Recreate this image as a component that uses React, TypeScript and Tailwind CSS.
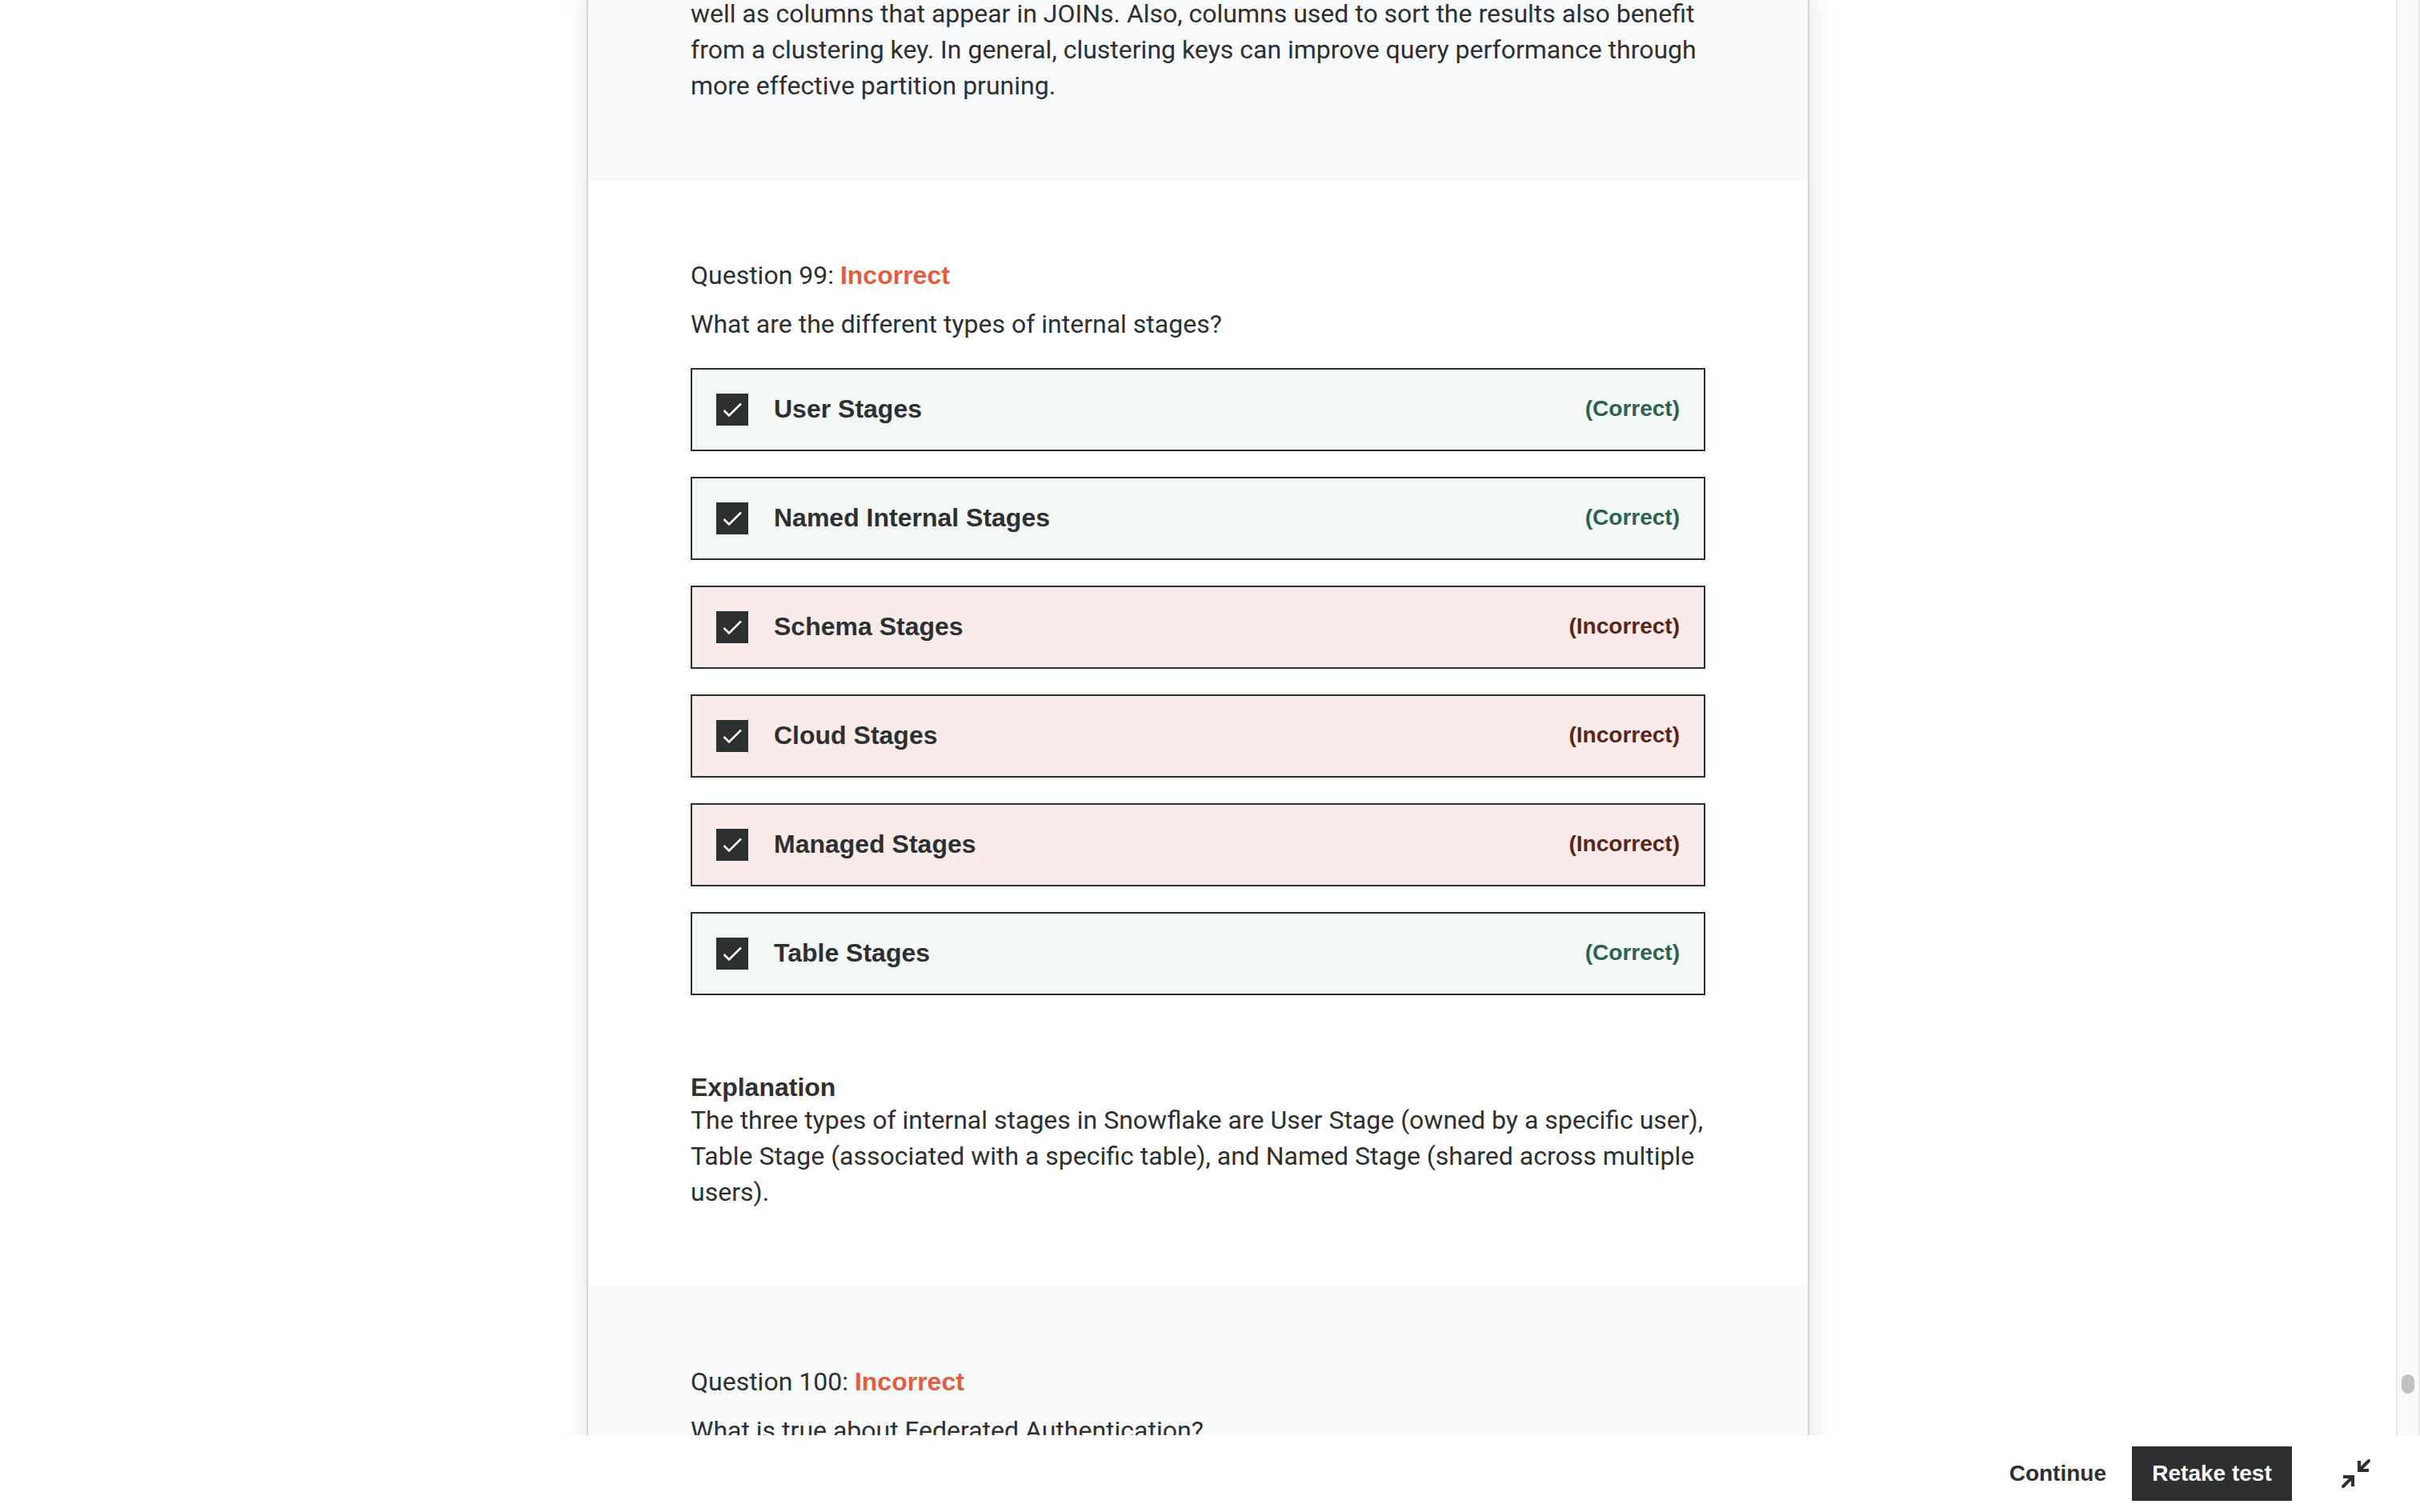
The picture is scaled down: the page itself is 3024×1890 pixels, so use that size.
type Verdict = 'Correct' | 'Incorrect';

type Option = { label: string; verdict: Verdict };

const options: Option[] = [
  { label: 'User Stages', verdict: 'Correct' },
  { label: 'Named Internal Stages', verdict: 'Correct' },
  { label: 'Schema Stages', verdict: 'Incorrect' },
  { label: 'Cloud Stages', verdict: 'Incorrect' },
  { label: 'Managed Stages', verdict: 'Incorrect' },
  { label: 'Table Stages', verdict: 'Correct' },
];

function QuestionHeading({ number, prompt }: { number: number; prompt: string }) {
  return (
    <>
      <h2>
        Question {number}:{' '}
        <span className="font-['Liberation_Sans',sans-serif] font-bold text-[#e35e3e]">Incorrect</span>
      </h2>
      <p className="mt-4">{prompt}</p>
    </>
  );
}

function OptionRow({ label, verdict }: Option) {
  const correct = verdict === 'Correct';
  return (
    <li>
      <label
        className={`flex items-start border-2 border-[#2d2f31] px-[30px] py-[30px] font-['Liberation_Sans',sans-serif] leading-[38px] font-bold ${
          correct ? 'bg-[#f3f7f6]' : 'bg-[#f8ebe9]'
        }`}
      >
        <span className="relative size-10 shrink-0">
          <input type="checkbox" defaultChecked className="block size-10 appearance-none bg-[#2d2f31]" />
          <svg viewBox="0 0 40 40" className="pointer-events-none absolute inset-0 size-10" aria-hidden="true">
            <path d="M9.5 21l6.5 6.5L31 12.5" fill="none" stroke="#fff" strokeWidth="2.6" />
          </svg>
        </span>
        <span className="ml-8 flex-1">{label}</span>
        <span className={`text-[28px] leading-[38px] ${correct ? 'text-[#2f6053]' : 'text-[#5b2418]'}`}>
          ({verdict})
        </span>
      </label>
    </li>
  );
}

function CollapseIcon() {
  return (
    <svg viewBox="0 0 40 40" className="size-10" fill="none" stroke="#2d2f31" strokeWidth="4" aria-hidden="true">
      <path d="M24 4v12h12" />
      <path d="M25 15L36 4" strokeLinecap="round" />
      <path d="M4 24h12v12" />
      <path d="M15 25L4 36" strokeLinecap="round" />
    </svg>
  );
}

export default function App() {
  return (
    <div className="flex h-screen flex-col bg-white font-['Roboto',sans-serif] text-[32px] leading-[45px] text-[#2d2f31]">
      <div className="flex min-h-0 flex-1">
        <main className="min-w-0 flex-1 overflow-hidden">
          <div className="mx-auto -mt-[5px] w-full max-w-[1528px] border-x-2 border-[#d1d7dc] bg-white shadow-[0_0_32px_rgba(0,0,0,0.12)]">
            <section className="bg-[#f7f9fb] px-32 pb-24">
              <p>
                well as columns that appear in JOINs. Also, columns used to sort the results also benefit from a
                clustering key. In general, clustering keys can improve query performance through more effective
                partition pruning.
              </p>
            </section>
            <section className="px-32 py-24">
              <QuestionHeading number={99} prompt="What are the different types of internal stages?" />
              <ul className="mt-8 flex flex-col gap-8">
                {options.map((option) => (
                  <OptionRow key={option.label} {...option} />
                ))}
              </ul>
              <h3 className="mt-24 font-['Liberation_Sans',sans-serif] leading-[38px] font-bold">Explanation</h3>
              <p>
                The three types of internal stages in Snowflake are User Stage (owned by a specific user), Table Stage
                (associated with a specific table), and Named Stage (shared across multiple users).
              </p>
            </section>
            <section className="bg-[#f7f9fb] px-32 py-24">
              <QuestionHeading number={100} prompt="What is true about Federated Authentication?" />
            </section>
          </div>
        </main>
        <div className="flex w-[30px] shrink-0 flex-col items-center border-x-2 border-[#e8e8e8] bg-[#fafafa]">
          <div className="mt-auto mb-[52px] h-6 w-4 rounded-full bg-[#c1c1c1]" />
        </div>
      </div>
      <footer className="flex h-24 shrink-0 items-center justify-end bg-white pr-[60px] font-['Liberation_Sans',sans-serif] text-[28px] leading-[38px] font-bold">
        <button type="button" className="mr-8">
          Continue
        </button>
        <button type="button" className="h-[68px] w-[200px] bg-[#2d2f31] text-white">
          Retake test
        </button>
        <button type="button" className="ml-[60px]" aria-label="Exit expanded view">
          <CollapseIcon />
        </button>
      </footer>
    </div>
  );
}
